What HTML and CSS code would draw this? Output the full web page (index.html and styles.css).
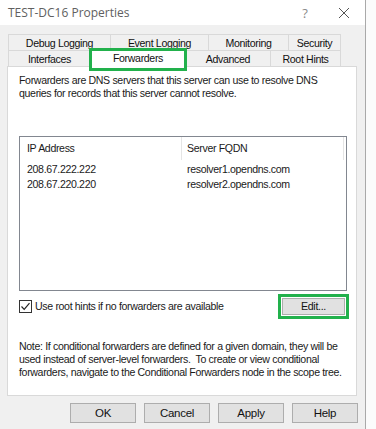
FILE: index.html
```html
<!DOCTYPE html>
<html>
<head>
<meta charset="utf-8">
<link rel="stylesheet" href="styles.css">
</head>
<body>
<div class="window">
  <div class="titlebar">
    <span class="title">TEST-DC16 Properties</span>
    <span class="help">?</span>
    <span class="close">
      <svg width="12" height="12" viewBox="0 0 12 12"><path d="M1 1L11 11M11 1L1 11" stroke="#555" stroke-width="1"/></svg>
    </span>
  </div>
  <div class="body">
    <div class="tabs">
      <div class="tabrow row1">
        <div class="tab t-debug">Debug Logging</div>
        <div class="tab t-event">Event Logging</div>
        <div class="tab t-mon">Monitoring</div>
        <div class="tab t-sec">Security</div>
      </div>
      <div class="tabrow row2">
        <div class="tab t-int">Interfaces</div>
        <div class="tab t-fwd selected">Forwarders</div>
        <div class="tab t-adv">Advanced</div>
        <div class="tab t-root">Root Hints</div>
      </div>
    </div>
    <div class="panel">
      <p class="intro">Forwarders are DNS servers that this server can use to resolve DNS queries for records that this server cannot resolve.</p>
      <div class="listbox">
        <div class="lhead">
          <div class="col c1">IP Address</div>
          <div class="col c2">Server FQDN</div>
        </div>
        <div class="lrow"><div class="col c1">208.67.222.222</div><div class="col c2">resolver1.opendns.com</div></div>
        <div class="lrow"><div class="col c1">208.67.220.220</div><div class="col c2">resolver2.opendns.com</div></div>
      </div>
      <div class="optrow">
        <label class="check">
          <span class="box"><svg width="11" height="11" viewBox="0 0 11 11"><path d="M1.5 5.5L4.2 8.3L9.5 2.2" fill="none" stroke="#222" stroke-width="1.2"/></svg></span>
          Use root hints if no forwarders are available
        </label>
        <div class="editwrap"><button class="btn edit">Edit...</button></div>
      </div>
      <p class="note">Note: If conditional forwarders are defined for a given domain, they will be used instead of server-level forwarders.&nbsp; To create or view conditional forwarders, navigate to the Conditional Forwarders node in the scope tree.</p>
    </div>
    <div class="buttons">
      <button class="btn dlg">OK</button>
      <button class="btn dlg">Cancel</button>
      <button class="btn dlg">Apply</button>
      <button class="btn dlg">Help</button>
    </div>
  </div>
</div>
</body>
</html>
```
FILE: styles.css
```css
html, body {
  margin: 0;
  padding: 0;
  background: #fbfbfb;
  font-family: "Liberation Sans", Arial, sans-serif;
  font-size: 10.6px;
  letter-spacing: -0.35px;
  color: #1a1a1a;
}
.window {
  width: 365px;
  height: 429px;
  border-right: 1px solid #a9a9a9;
  background: #f0f0f0;
  display: flex;
  flex-direction: column;
}
.titlebar {
  height: 25px;
  background: #fff;
  display: flex;
  align-items: center;
  padding-left: 8px;
  color: #606060;
  font-family: "Open Sans", sans-serif;
  font-size: 12px;
  letter-spacing: 0;
}
.title { flex: 1; }
.help {
  width: 20px;
  text-align: center;
  font-size: 13px;
  color: #8a8a8a;
  margin-right: 19px;
}
.close {
  width: 20px;
  display: flex;
  justify-content: center;
  margin-right: 11px;
}
.body {
  flex: 1;
  padding: 9px 8px 0 7px;
  display: flex;
  flex-direction: column;
}
.tabs {
  width: 334px;
  margin-left: 1px;
  position: relative;
  z-index: 1;
}
.tabrow {
  display: flex;
}
.row1 .tab { height: 16px; }
.row2 .tab { height: 16px; }
.tab {
  box-sizing: border-box;
  border: 1px solid #d9d9d9;
  border-bottom: none;
  margin-right: -1px;
  text-align: center;
  line-height: 16px;
  background: #f0f0f0;
  color: #111;
}
.t-debug { width: 103px; }
.t-event { width: 99px; }
.t-mon { width: 81px; }
.t-sec { width: 53px; }
.t-int { width: 83px; }
.t-fwd { width: 96px; }
.t-adv { width: 86px; }
.t-root { width: 71px; }
.tab.selected {
  background: #fff;
  position: relative;
  z-index: 2;
  height: 18px;
  margin-bottom: -2px;
  line-height: 14px;
}
.tab.selected::after {
  content: "";
  position: absolute;
  left: -2px;
  right: -2px;
  top: -3px;
  bottom: -3px;
  border: 3px solid #22b14c;
}
.panel {
  width: 350px;
  height: 330px;
  box-sizing: border-box;
  background: #fff;
  border: 1px solid #d9d9d9;
  padding: 7px 0 0 11px;
}
.intro {
  margin: 0;
  width: 320px;
  line-height: 13px;
}
.listbox {
  margin-top: 36px;
  width: 328px;
  height: 155px;
  box-sizing: border-box;
  border: 1px solid #828790;
}
.lhead, .lrow {
  display: flex;
}
.lhead {
  height: 23px;
  align-items: center;
}
.lhead .c1 { border-right: 1px solid #e5e5e5; height: 23px; line-height: 23px; }
.lhead .c2 { border-right: 1px solid #e5e5e5; height: 23px; line-height: 23px; }
.lrow { height: 15px; line-height: 15px; }
.lhead + .lrow { margin-top: 2px; }
.col { box-sizing: border-box; }
.c1 { width: 162px; padding-left: 7px; }
.c2 { width: 162px; padding-left: 5px; }
.optrow {
  display: flex;
  align-items: center;
  margin-top: 4px;
  width: 329px;
  height: 22px;
}
.check {
  flex: 1;
  display: flex;
  align-items: center;
  gap: 3px;
}
.box {
  width: 11px;
  height: 11px;
  border: 1px solid #333;
  background: #fff;
  display: flex;
}
.editwrap {
  border: 3px solid #22b14c;
  padding: 1px;
  margin-right: -1px;
}
.btn {
  font-family: "Liberation Sans", Arial, sans-serif;
  font-size: 10.6px;
  letter-spacing: -0.3px;
  color: #111;
  background: #e1e1e1;
  border: 1px solid #adadad;
  padding: 0;
  margin: 0;
}
.edit {
  display: block;
  width: 63px;
  height: 17px;
  line-height: 15px;
}
.note {
  margin: 23px 0 0 0;
  width: 334px;
  line-height: 13px;
}
.buttons {
  display: flex;
  justify-content: flex-end;
  gap: 8px;
  width: 351px;
  margin-top: 7px;
}
.btn.dlg {
  width: 66px;
  height: 20px;
  font-size: 11.5px;
}
```
